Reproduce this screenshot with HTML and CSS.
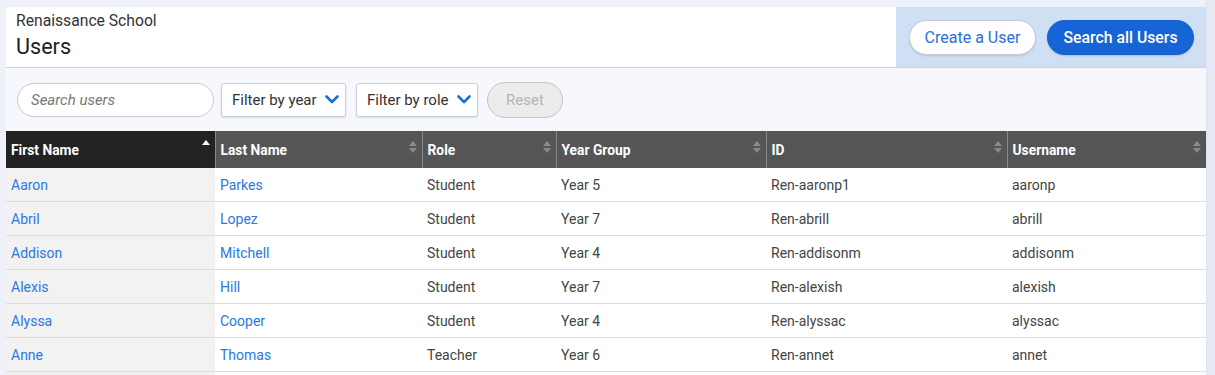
FILE: index.html
```html
<!DOCTYPE html>
<html>
<head>
<meta charset="utf-8">
<link rel="stylesheet" href="styles.css">
</head>
<body>
<div class="app">
  <header class="top">
    <div class="title-block">
      <div class="school">Renaissance School</div>
      <h1 class="page-title">Users</h1>
    </div>
    <div class="actions">
      <button class="btn btn-light">Create a User</button>
      <button class="btn btn-primary">Search all Users</button>
    </div>
  </header>
  <div class="filters">
    <input class="search" type="text" placeholder="Search users">
    <div class="select">Filter by year
      <svg class="chev" width="14" height="9" viewBox="0 0 14 9"><path d="M1.5 1.5 L7 7 L12.5 1.5" fill="none" stroke="#1a6fd6" stroke-width="2.6" stroke-linecap="round" stroke-linejoin="round"/></svg>
    </div>
    <div class="select">Filter by role
      <svg class="chev" width="14" height="9" viewBox="0 0 14 9"><path d="M1.5 1.5 L7 7 L12.5 1.5" fill="none" stroke="#1a6fd6" stroke-width="2.6" stroke-linecap="round" stroke-linejoin="round"/></svg>
    </div>
    <button class="reset">Reset</button>
  </div>
  <table class="grid">
    <colgroup>
      <col class="c1"><col class="c2"><col class="c3"><col class="c4"><col class="c5"><col class="c6">
    </colgroup>
    <thead>
      <tr>
        <th class="active"><span>First Name</span><span class="sort asc"><i class="up"></i></span></th>
        <th><span>Last Name</span><span class="sort"><i class="up"></i><i class="down"></i></span></th>
        <th><span>Role</span><span class="sort"><i class="up"></i><i class="down"></i></span></th>
        <th><span>Year Group</span><span class="sort"><i class="up"></i><i class="down"></i></span></th>
        <th><span>ID</span><span class="sort"><i class="up"></i><i class="down"></i></span></th>
        <th><span>Username</span><span class="sort"><i class="up"></i><i class="down"></i></span></th>
      </tr>
    </thead>
    <tbody>
      <tr><td class="first"><a>Aaron</a></td><td><a>Parkes</a></td><td>Student</td><td>Year 5</td><td>Ren-aaronp1</td><td>aaronp</td></tr>
      <tr><td class="first"><a>Abril</a></td><td><a>Lopez</a></td><td>Student</td><td>Year 7</td><td>Ren-abrill</td><td>abrill</td></tr>
      <tr><td class="first"><a>Addison</a></td><td><a>Mitchell</a></td><td>Student</td><td>Year 4</td><td>Ren-addisonm</td><td>addisonm</td></tr>
      <tr><td class="first"><a>Alexis</a></td><td><a>Hill</a></td><td>Student</td><td>Year 7</td><td>Ren-alexish</td><td>alexish</td></tr>
      <tr><td class="first"><a>Alyssa</a></td><td><a>Cooper</a></td><td>Student</td><td>Year 4</td><td>Ren-alyssac</td><td>alyssac</td></tr>
      <tr><td class="first"><a>Anne</a></td><td><a>Thomas</a></td><td>Teacher</td><td>Year 6</td><td>Ren-annet</td><td>annet</td></tr>
      <tr><td class="first"></td><td></td><td></td><td></td><td></td><td></td></tr>
    </tbody>
  </table>
</div>
<div class="scrollbar"></div>
</body>
</html>
```

FILE: styles.css
```css
html, body {
  margin: 0;
  padding: 0;
  height: 375px;
  overflow: hidden;
}
body {
  background: #eef1f9;
  font-family: Roboto, "Liberation Sans", Arial, sans-serif;
  color: #444;
  position: relative;
}
.app {
  width: 1200px;
  margin: 7px 0 0 6px;
  border-right: 1px solid #d4d8e2;
  background: #f6f8fd;
}
.top {
  display: flex;
  height: 60px;
  border-bottom: 1px solid #cdd1da;
}
.title-block {
  flex: 1;
  background: #fff;
  padding: 5px 10px 0 10px;
}
.school {
  font-size: 15.7px;
  color: #333;
  line-height: 18px;
}
.page-title {
  margin: 5px 0 0 0;
  font-size: 21.6px;
  font-weight: 400;
  color: #222;
  line-height: 24px;
}
.actions {
  width: 310px;
  background: #cfe0f5;
  display: flex;
  align-items: center;
  gap: 11px;
  padding-left: 13px;
  box-sizing: border-box;
}
.btn {
  font-family: Roboto, "Liberation Sans", Arial, sans-serif;
  font-size: 16px;
  height: 35px;
  border-radius: 18px;
  cursor: pointer;
  padding: 0;
}
.btn-light {
  width: 127px;
  background: #fff;
  color: #2a6fd8;
  border: 1px solid #c3cad6;
  box-shadow: 0 1px 2px rgba(0,0,0,0.12);
}
.btn-primary {
  width: 147px;
  background: #1565d6;
  color: #fff;
  border: 1px solid #1560cc;
  font-weight: 500;
  font-size: 15.8px;
  box-shadow: 0 1px 2px rgba(0,0,0,0.15);
}
.filters {
  display: flex;
  align-items: center;
  height: 63px;
  padding-left: 11px;
  box-sizing: border-box;
}
.search {
  width: 197px;
  height: 34px;
  box-sizing: border-box;
  border: 1px solid #c9c9c9;
  border-radius: 17px;
  padding: 0 13px;
  font-family: Roboto, "Liberation Sans", Arial, sans-serif;
  font-size: 15px;
  background: #fff;
  outline: none;
}
.search::placeholder {
  color: #777;
  font-style: italic;
}
.select {
  display: flex;
  align-items: center;
  justify-content: space-between;
  height: 34px;
  box-sizing: border-box;
  margin-left: 7px;
  padding: 0 6px 0 10px;
  border: 1px solid #c6d0e0;
  border-radius: 3px;
  background: #fff;
  box-shadow: 0 1px 2px rgba(0,0,0,0.12);
  font-size: 15px;
  color: #333;
  width: 125px;
}
.select + .select {
  margin-left: 10px;
  width: 122px;
}
.chev { margin-left: 4px; flex: none; }
.reset {
  margin-left: 9px;
  width: 76px;
  height: 36px;
  border-radius: 18px;
  border: 1px solid #c4c4c4;
  background: #ececec;
  color: #b4b4b4;
  font-family: Roboto, "Liberation Sans", Arial, sans-serif;
  font-size: 15px;
  padding: 0;
}
.grid {
  width: 1200px;
  border-collapse: collapse;
  table-layout: fixed;
  font-size: 14px;
  background: #fff;
}
.c1 { width: 209px; }
.c2 { width: 207px; }
.c3 { width: 134px; }
.c4 { width: 210px; }
.c5 { width: 241px; }
.c6 { width: 199px; }
.grid th {
  background: #555;
  color: #fff;
  font-weight: 700;
  text-align: left;
  height: 37px;
  padding: 0 6px 0 5px;
  border-left: 1px solid #888;
  position: relative;
  font-size: 13.8px;
}
.grid th:first-child { border-left: none; }
.grid th.active { background: #222; }
.sort {
  position: absolute;
  right: 5px;
  top: 10px;
  display: flex;
  flex-direction: column;
  gap: 2px;
}
.sort i {
  display: block;
  width: 0;
  height: 0;
  border-left: 4px solid transparent;
  border-right: 4px solid transparent;
}
.sort .up { border-bottom: 5px solid #8a8a8a; }
.sort .down { border-top: 5px solid #8a8a8a; }
.sort.asc { top: 9px; }
.sort.asc .up { border-bottom-color: #fff; }
.grid td {
  height: 33px;
  padding: 0 5px;
  border-bottom: 1px solid #dcdcdc;
  color: #444;
  white-space: nowrap;
}
.grid td.first { background: #f2f2f2; }
.grid a {
  color: #2a78e0;
  text-decoration: none;
}
.scrollbar {
  position: absolute;
  top: 0;
  right: 0;
  width: 8px;
  height: 375px;
  background: #e8ebf6;
  border-left: 1px solid #dfe2ec;
}
```
